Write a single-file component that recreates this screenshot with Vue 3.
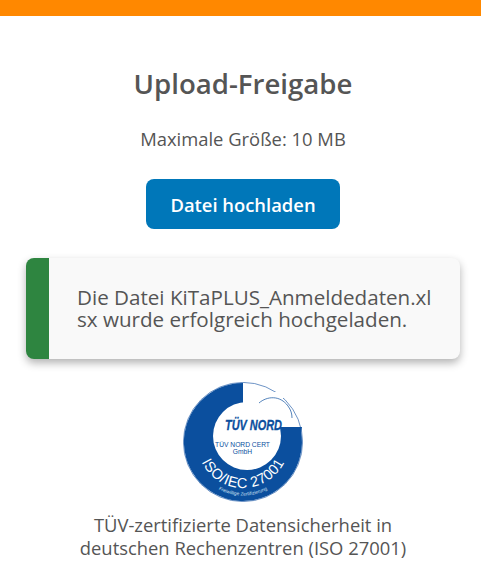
<script setup>
</script>

<template>
  <div class="page">
    <div class="topbar"></div>
    <main class="content">
      <h1 class="title">Upload-Freigabe</h1>
      <p class="limit">Maximale Größe: 10 MB</p>
      <button class="upload" type="button">Datei hochladen</button>
      <div class="notice">
        <p class="notice-text">Die Datei KiTaPLUS_Anmeldedaten.xlsx wurde erfolgreich hochgeladen.</p>
      </div>
      <svg class="seal" viewBox="0 0 120 120" width="120" height="120" role="img" aria-label="TÜV NORD ISO/IEC 27001">
        <defs>
          <path id="iso-arc" d="M14 60 A 46 46 0 0 0 106 60" />
          <path id="small-arc" d="M6.5 60 A 53.5 53.5 0 0 0 113.5 60" />
        </defs>
        <circle cx="60" cy="60" r="59.6" fill="#fff" stroke="#2f66ad" stroke-width="0.7" />
        <path d="M60 1 A 59 59 0 1 0 118.1 50 L 119 45 H 60 Z" fill="#0b4f9e" />
        <circle cx="64" cy="54" r="34" fill="#fff" />
        <path d="M60 10 H 100 V 45 H 60 Z" fill="#fff" />
        <path d="M76 21 C 84 14 97 13 105 24 C 108 28 109 32 109 36" fill="none" stroke="#0b4f9e" stroke-width="0.7" />
        <text x="70.5" y="48" class="brand" textLength="57" lengthAdjust="spacingAndGlyphs">TÜV NORD</text>
        <text x="59.5" y="65" class="cert">TÜV NORD CERT</text>
        <text x="59.5" y="71.5" class="cert">GmbH</text>
        <text class="iso"><textPath href="#iso-arc" startOffset="50%" text-anchor="middle">ISO/IEC 27001</textPath></text>
        <text class="small"><textPath href="#small-arc" startOffset="50%" text-anchor="middle">Freiwillige Zertifizierung</textPath></text>
      </svg>
      <p class="caption">TÜV-zertifizierte Datensicherheit in<br />deutschen Rechenzentren (ISO 27001)</p>
    </main>
  </div>
</template>

<style>
html, body { margin: 0; background: #fff; }
</style>

<style scoped>
.page {
  width: 481px;
  height: 572px;
  overflow: hidden;
  background: #fff;
  font-family: "Open Sans", "Noto Sans", sans-serif;
  color: #555;
}
.topbar { height: 16px; background: #ff8800; }
.content {
  display: flex;
  flex-direction: column;
  align-items: center;
  padding: 0 21px 0 26px;
}
.title {
  margin: 48px 0 0;
  font-size: 27.6px;
  line-height: 38px;
  font-weight: 600;
  color: #555;
}
.limit {
  margin: 25px 0 0;
  font-size: 18.4px;
  line-height: 24px;
}
.upload {
  margin-top: 28px;
  width: 194px;
  height: 50px;
  border: 0;
  border-radius: 8px;
  background: #0077b9;
  color: #fff;
  font-family: inherit;
  font-size: 18.4px;
  font-weight: 600;
}
.notice {
  box-sizing: border-box;
  align-self: stretch;
  height: 101px;
  margin-top: 29px;
  display: flex;
  align-items: center;
  padding: 0 27px 1px 28px;
  border-left: 23px solid #2e8540;
  border-radius: 8px;
  background: #f9f9f9;
  box-shadow: 0 4px 8px rgba(0, 0, 0, 0.3);
}
.notice-text {
  margin: 0;
  font-size: 20.6px;
  line-height: 22px;
  word-break: break-all;
}
.seal { display: block; margin-top: 23px; }
.brand { font-family: "Liberation Sans", sans-serif; font-size: 14px; font-weight: 700; font-style: italic; fill: #0b4f9e; stroke: #0b4f9e; stroke-width: 0.3; text-anchor: middle; }
.cert { font-family: "Liberation Sans", sans-serif; font-size: 6.7px; fill: #0b4f9e; text-anchor: middle; }
.iso { font-family: "Liberation Sans", sans-serif; font-size: 14.5px; fill: #fff; letter-spacing: 0.4px; }
.small { font-family: "Liberation Sans", sans-serif; font-size: 4.8px; fill: #cfe0f2; }
.caption {
  margin: 11px 0 0;
  align-self: center;
  text-align: center;
  font-size: 18.4px;
  line-height: 23px;
  white-space: nowrap;
}
</style>
